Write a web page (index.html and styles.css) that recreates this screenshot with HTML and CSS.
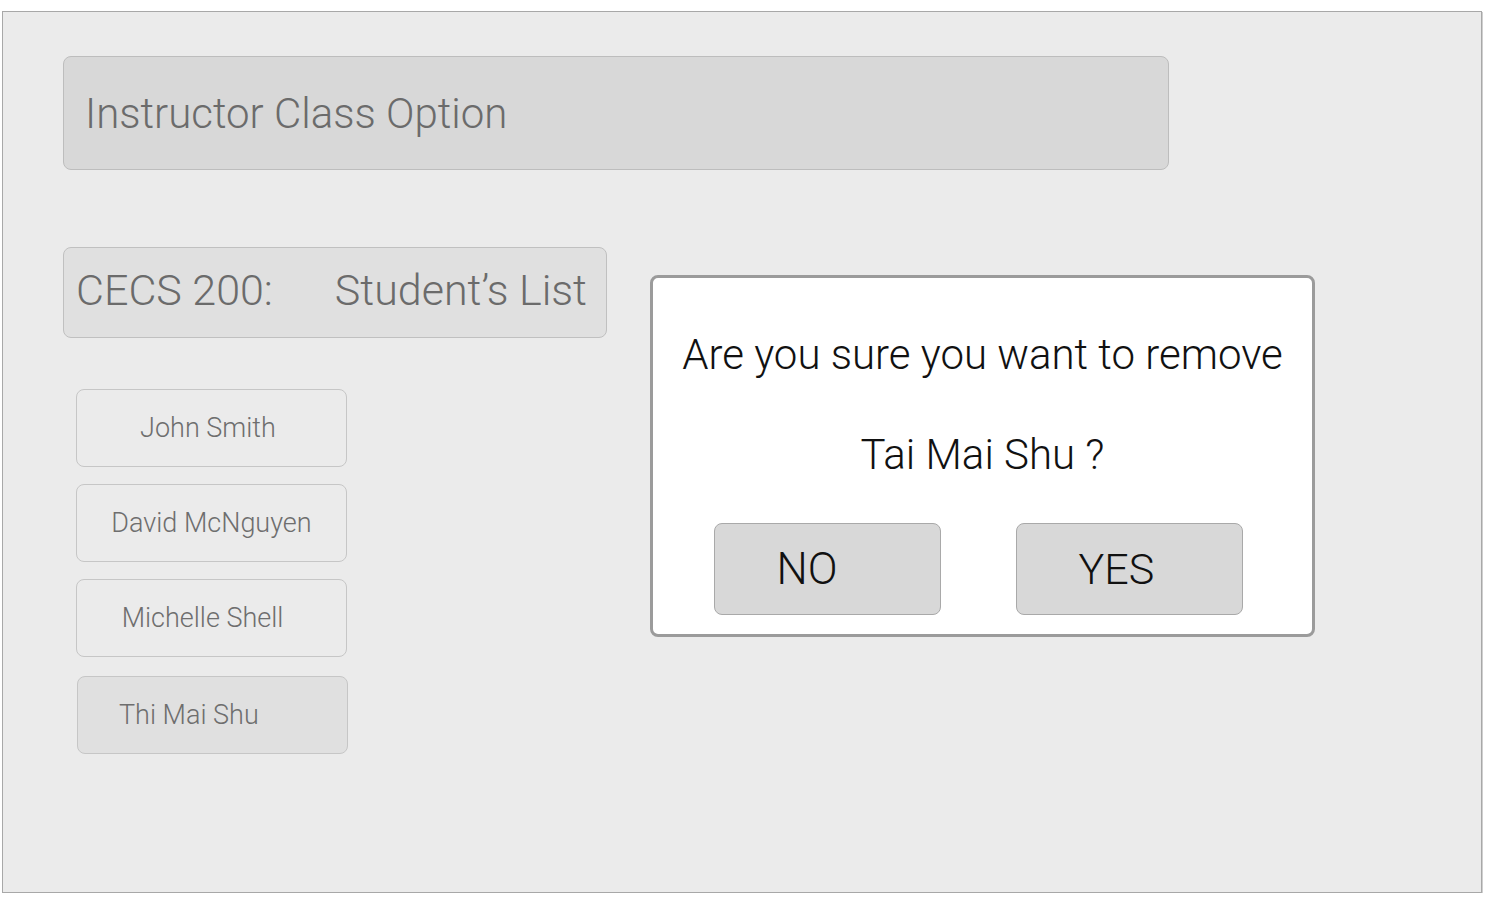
FILE: index.html
```html
<!DOCTYPE html>
<html>
<head>
<meta charset="utf-8">
<link rel="stylesheet" href="styles.css">
</head>
<body>
<div class="frame">
  <div class="title-bar">Instructor Class Option</div>
  <div class="main-row">
    <div class="left-col">
      <div class="class-box"><span class="class-code">CECS 200:</span><span class="class-label">Student’s List</span></div>
      <div class="student-list">
        <div class="student student-john">John Smith</div>
        <div class="student student-david">David McNguyen</div>
        <div class="student student-michelle">Michelle Shell</div>
        <div class="student student-selected">Thi Mai Shu</div>
      </div>
    </div>
    <div class="dialog">
      <div class="dialog-line dialog-line1">Are you sure you want to remove</div>
      <div class="dialog-line dialog-line2">Tai Mai Shu ?</div>
      <div class="dialog-buttons">
        <div class="btn btn-no">NO</div>
        <div class="btn btn-yes">YES</div>
      </div>
    </div>
  </div>
</div>
</body>
</html>
```
FILE: styles.css
```css
html, body {
  margin: 0;
  padding: 0;
  background: #ffffff;
}
body {
  font-family: "Roboto", "Liberation Sans", sans-serif;
  font-weight: 300;
}
.frame {
  box-sizing: border-box;
  margin: 11px 0 0 2px;
  width: 1480px;
  height: 882px;
  background: #ebebeb;
  border: 1px solid #a8a8a8;
  box-shadow: 1px 1px 0 #cfcfcf;
  padding: 44px 0 0 60px;
}
.title-bar {
  box-sizing: border-box;
  width: 1106px;
  height: 114px;
  background: #d8d8d8;
  border: 1px solid #bdbdbd;
  border-radius: 8px;
  display: flex;
  align-items: center;
  padding-left: 21px;
  font-size: 42px;
  color: #6b6b6b;
}
.main-row {
  display: flex;
  align-items: flex-start;
  margin-top: 77px;
}
.left-col {
  width: 544px;
}
.class-box {
  box-sizing: border-box;
  width: 544px;
  height: 91px;
  background: #e0e0e0;
  border: 1px solid #c0c0c0;
  border-radius: 8px;
  display: flex;
  align-items: center;
  padding-left: 12px;
  padding-bottom: 6px;
  font-size: 43px;
  color: #6b6b6b;
}
.class-label {
  margin-left: 62px;
}
.student-list {
  display: flex;
  flex-direction: column;
  gap: 17px;
  margin-top: 51px;
  padding-left: 13px;
}
.student {
  box-sizing: border-box;
  width: 271px;
  height: 78px;
  border: 1px solid #c6c6c6;
  border-radius: 8px;
  display: flex;
  align-items: center;
  justify-content: center;
  font-size: 27px;
  color: #6e6e6e;
}
.student-john {
  padding-right: 7px;
}
.student-michelle {
  padding-right: 18px;
}
.student-selected {
  background: #e0e0e0;
  justify-content: flex-start;
  padding-left: 41px;
  margin-top: 2px;
  margin-left: 1px;
}
.dialog {
  box-sizing: border-box;
  width: 665px;
  height: 362px;
  margin-left: 43px;
  margin-top: 28px;
  background: #ffffff;
  border: 3px solid #9b9b9b;
  border-radius: 8px;
  display: flex;
  flex-direction: column;
  align-items: center;
  color: #111111;
}
.dialog-line {
  font-size: 42px;
  line-height: 48px;
}
.dialog-line1 {
  margin-top: 53px;
}
.dialog-line2 {
  margin-top: 52px;
}
.dialog-buttons {
  display: flex;
  gap: 75px;
  margin-top: 44px;
  margin-left: -9px;
}
.btn {
  box-sizing: border-box;
  width: 227px;
  height: 92px;
  background: #d8d8d8;
  border: 1px solid #a9a9a9;
  border-radius: 8px;
  display: flex;
  align-items: center;
  padding-left: 62px;
  font-size: 44px;
  color: #111111;
}
.btn-yes {
  font-size: 43px;
}
```
